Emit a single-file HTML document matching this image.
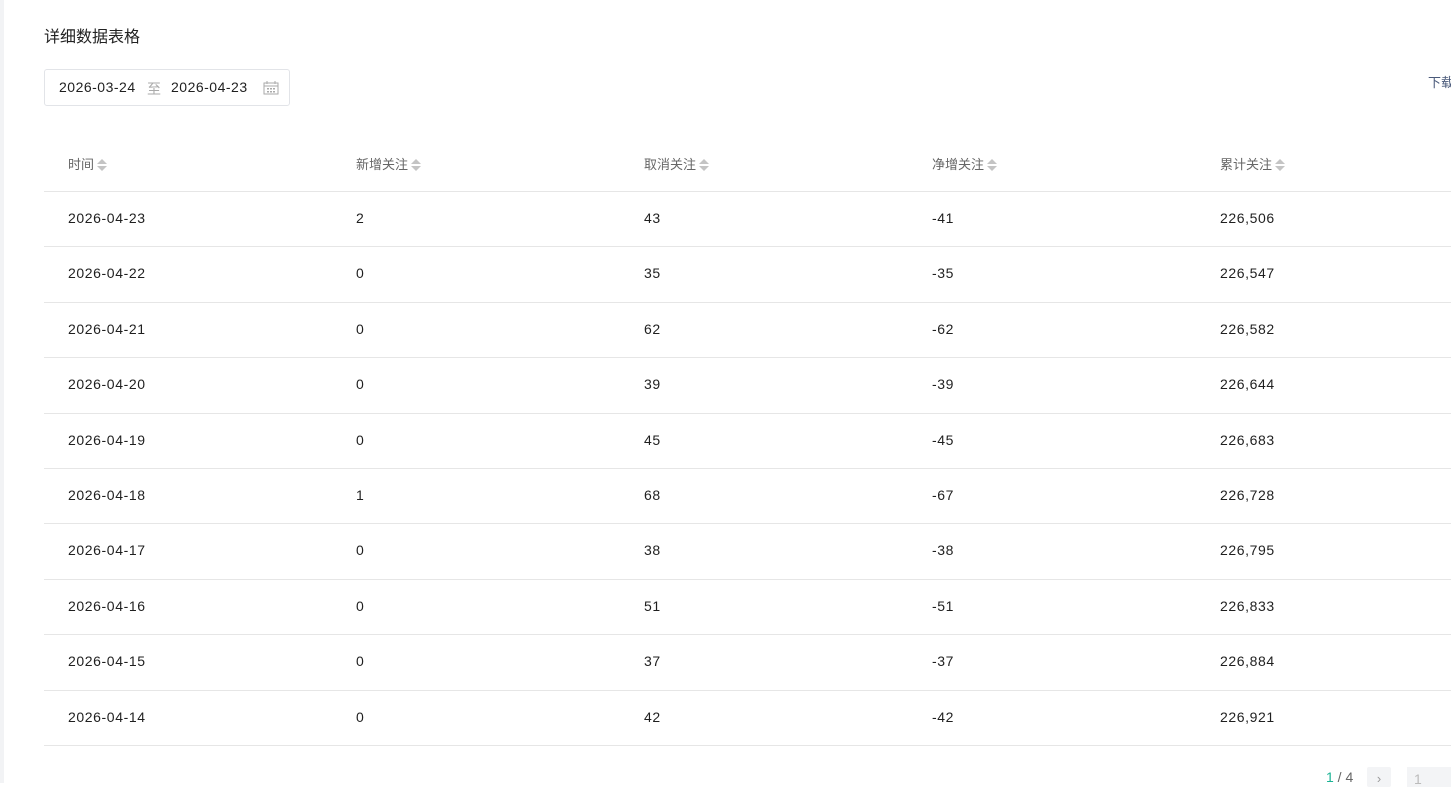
<!DOCTYPE html>
<html><head><meta charset="utf-8"><style>
body{margin:0;width:1451px;height:783px;overflow:hidden;background:#fff;font-family:"Liberation Sans","Noto Sans CJK SC",sans-serif;color:#1f1f1f;position:relative}
.strip{position:absolute;left:0;top:0;width:4px;height:783px;background:#f2f3f5}
.title{position:absolute;left:44px;top:23px;font-size:16px;color:#222}
.picker{position:absolute;left:44px;top:69px;width:246px;height:37px;border:1px solid #e2e4e8;border-radius:3px;font-size:14px;box-sizing:border-box;letter-spacing:0.5px}
.picker span{position:absolute;top:9px}
.dl{position:absolute;left:1428px;top:72px;font-size:13px;color:#4a5a7a;white-space:nowrap}
.hdr,.row{position:absolute;left:44px;width:1407px}
.hdr{top:140px;height:51px;border-bottom:1px solid #e6e6e6;font-size:13px;color:#666}
.row{height:55.4px;border-bottom:1px solid #e6e6e6;font-size:14px;box-sizing:border-box;letter-spacing:0.6px}
.c{position:absolute;top:0;line-height:52px}
.hdr .c{line-height:50px}
.s{display:inline-block;vertical-align:middle;margin-left:3px;width:10px;height:14px;position:relative;top:-1px}
.s:before{content:"";position:absolute;left:0;top:1px;border:5px solid transparent;border-top:0;border-bottom:5px solid #c4c4c4}
.s:after{content:"";position:absolute;left:0;top:8px;border:5px solid transparent;border-bottom:0;border-top:5px solid #c4c4c4}
.pg{position:absolute;top:769px;font-size:14px}
</style></head><body>
<div class="strip"></div>
<div class="title">详细数据表格</div>
<div class="picker"><span style="left:14px">2026-03-24</span><span style="left:102px;color:#aaa">至</span><span style="left:126px">2026-04-23</span>
<svg style="position:absolute;left:218px;top:11px" width="16" height="14" viewBox="0 0 16 14"><rect x="1" y="2" width="14" height="11" fill="none" stroke="#aaa"/><line x1="1" y1="5" x2="15" y2="5" stroke="#aaa"/><line x1="4" y1="0" x2="4" y2="3" stroke="#aaa"/><line x1="12" y1="0" x2="12" y2="3" stroke="#aaa"/><g fill="#aaa"><rect x="4" y="7" width="2" height="1.5"/><rect x="7" y="7" width="2" height="1.5"/><rect x="10" y="7" width="2" height="1.5"/><rect x="4" y="10" width="2" height="1.5"/><rect x="7" y="10" width="2" height="1.5"/><rect x="10" y="10" width="2" height="1.5"/></g></svg></div>
<div class="dl">下载</div>
<div class="hdr"><div class="c" style="left:24px">时间<i class="s"></i></div><div class="c" style="left:312px">新增关注<i class="s"></i></div><div class="c" style="left:600px">取消关注<i class="s"></i></div><div class="c" style="left:888px">净增关注<i class="s"></i></div><div class="c" style="left:1176px">累计关注<i class="s"></i></div></div>
<div id="rows"></div>
<script>
var d=[["2026-04-23",2,43,-41,"226,506"],["2026-04-22",0,35,-35,"226,547"],["2026-04-21",0,62,-62,"226,582"],["2026-04-20",0,39,-39,"226,644"],["2026-04-19",0,45,-45,"226,683"],["2026-04-18",1,68,-67,"226,728"],["2026-04-17",0,38,-38,"226,795"],["2026-04-16",0,51,-51,"226,833"],["2026-04-15",0,37,-37,"226,884"],["2026-04-14",0,42,-42,"226,921"]];
var h="";d.forEach(function(r,i){h+='<div class="row" style="top:'+(192+i*55.4)+'px">';r.forEach(function(v,j){h+='<div class="c" style="left:'+(24+j*288)+'px">'+v+'</div>'});h+='</div>'});
document.getElementById("rows").innerHTML=h;
</script>
<div class="pg" style="left:1326px;color:#666"><span style="color:#1ab394">1</span> / 4</div>
<div style="position:absolute;left:1367px;top:767px;width:24px;height:20px;background:#f3f4f6;border-radius:2px;color:#999;font-size:13px;text-align:center;line-height:24px">›</div>
<div style="position:absolute;left:1407px;top:767px;width:44px;height:20px;background:#f3f4f6;color:#bbb;font-size:14px;padding-left:7px;box-sizing:border-box;line-height:24px">1</div>
</body></html>
